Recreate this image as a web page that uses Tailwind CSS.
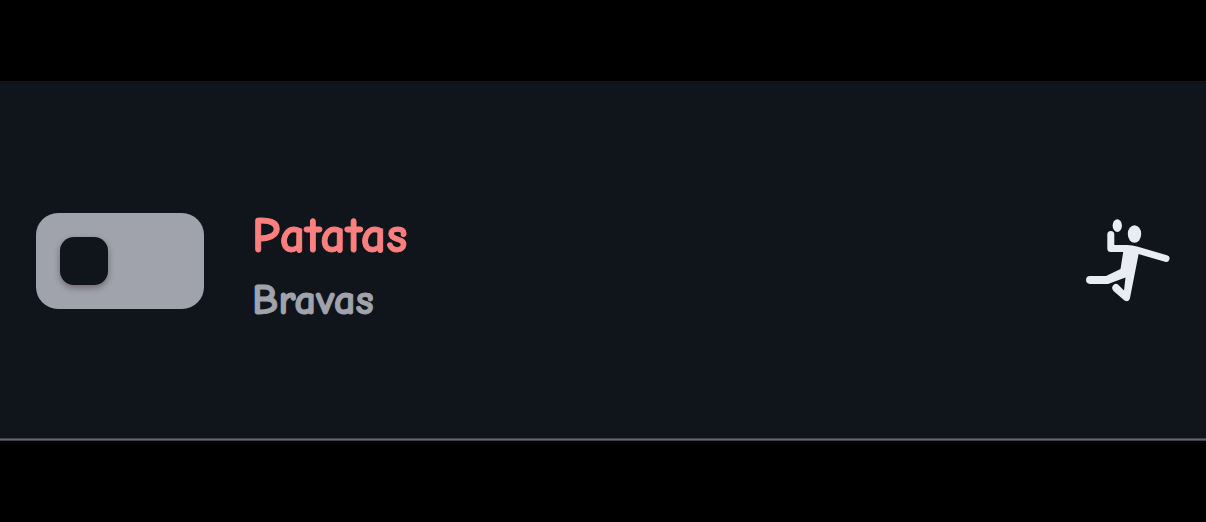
<!DOCTYPE html>
<html lang="es">
<head>
<meta charset="utf-8">
<meta name="viewport" content="width=device-width, initial-scale=1">
<title>Patatas Bravas</title>
<script src="https://cdn.jsdelivr.net/npm/@tailwindcss/browser@4"></script>
</head>
<body class="flex min-h-screen flex-col justify-center bg-black font-['Comic_Neue','Lato',sans-serif]">
<main class="flex items-center gap-12 bg-[#10141b] px-9 py-[121px] shadow-[inset_0_-1px_#3c4046,inset_0_-2px_#63656b,inset_0_-3px_#3c4046]">
  <input id="patatas" type="checkbox" role="switch" aria-describedby="bravas" class="h-24 w-42 shrink-0 cursor-pointer appearance-none rounded-[22px] bg-[#a0a3ab] p-6 before:block before:size-12 before:rounded-[14px] before:bg-[#10141b] before:shadow-[0_3px_6px_rgba(40,20,30,0.4)] before:content-[''] checked:before:translate-x-18">
  <div class="flex grow flex-col gap-2.5">
    <label for="patatas" class="text-[50px] leading-[68px] font-bold text-[#ff7f7f] [-webkit-text-stroke:1px_#ff7f7f]">Patatas</label>
    <p id="bravas" class="text-[43px] leading-[40px] font-bold text-[#a0a3ab] [-webkit-text-stroke:1px_#a0a3ab]">Bravas</p>
  </div>
  <svg class="h-[84px] w-[84px] shrink-0" viewBox="0 0 84 84" fill="none" stroke="#e9ecf1" stroke-linecap="round" stroke-linejoin="round" aria-hidden="true">
    <ellipse cx="31.300" cy="6.600" rx="4.700" ry="6.300" fill="#e9ecf1" stroke="none"/>
    <ellipse cx="48.500" cy="15" rx="6.700" ry="8.700" fill="#e9ecf1" stroke="none"/>
    <path stroke-width="7" d="M24.800 15.500V29.500H41Q46 29.500 51 31L80 39.500"/>
    <path d="M38 28L53 33L44 79Q42.500 84 38.500 81.500L27.500 72Q25 69 27 66.500Q29 63.500 32 65.500L38 71.500L39.500 58.500L22 65H4Q0 64.500 0 61Q0 57 4 57H20L34.500 50Z" fill="#e9ecf1" stroke="none"/>
  </svg>
</main>
</body>
</html>
